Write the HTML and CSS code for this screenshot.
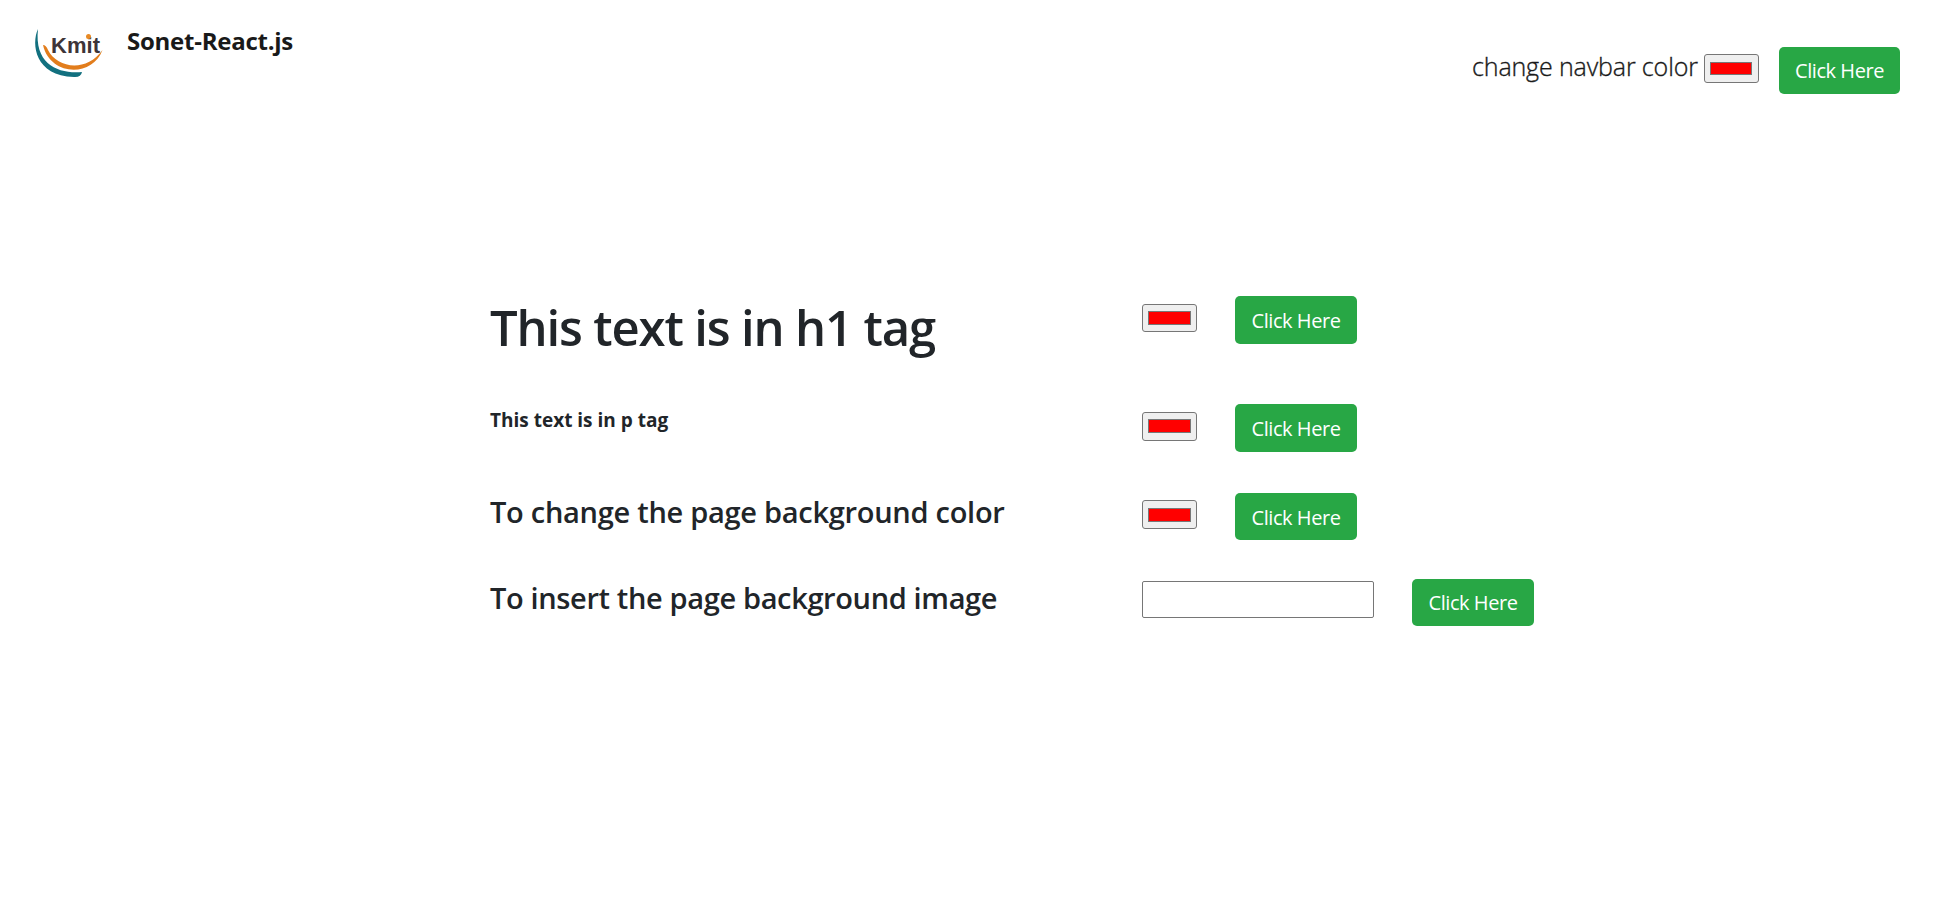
FILE: index.html
```
<!DOCTYPE html>
<html lang="en">
<head>
<meta charset="utf-8">
<title>Sonet-React.js</title>
<link rel="stylesheet" href="styles.css">
</head>
<body>
<header class="navbar">
  <svg class="logo" width="80" height="64" viewBox="0 0 80 64" role="img" aria-label="Kmit">
    <path d="M10 9C3 24 7 56 46 57Q53 57.500 54 52C31 54 6 45 10 9Z" fill="#12707f"/>
    <path d="M15 25Q18 25 20 30C29 48 58 53 74.500 30C64 58 22 56 15 25Z" fill="#e27d1c"/>
    <text class="logo-text" x="23" y="32.500" textLength="49">Kmit</text>
    <circle cx="60.500" cy="16.500" r="2.500" fill="#e88a25"/>
  </svg>
  <span class="brand">Sonet-React.js</span>
  <div class="nav-tools">
    <span class="nav-label">change navbar color</span>
    <button class="swatch nav-swatch" aria-label="Navbar color"><span class="chip"></span></button>
    <button class="btn nav-btn">Click Here</button>
  </div>
</header>
<main class="settings">
  <section class="row row-h1">
    <h1 class="title">This text is in h1 tag</h1>
    <div class="controls"><button class="swatch short" aria-label="Heading color"><span class="chip"></span></button><button class="btn">Click Here</button></div>
  </section>
  <section class="row row-p">
    <p class="para">This text is in p tag</p>
    <div class="controls"><button class="swatch" aria-label="Paragraph color"><span class="chip"></span></button><button class="btn">Click Here</button></div>
  </section>
  <section class="row row-color">
    <h3 class="sub sub-color">To change the page background color</h3>
    <div class="controls"><button class="swatch low" aria-label="Page color"><span class="chip"></span></button><button class="btn slim">Click Here</button></div>
  </section>
  <section class="row row-image">
    <h3 class="sub sub-image">To insert the page background image</h3>
    <div class="controls"><input class="url" type="text" aria-label="Image URL"><button class="btn slim">Click Here</button></div>
  </section>
</main>
</body>
</html>
```
FILE: styles.css
```
* { box-sizing: border-box; }
body {
  margin: 0;
  background: #fff;
  color: #212529;
  font-family: "Open Sans", "Noto Sans", sans-serif;
}
h1, h3, p { margin: 0; white-space: nowrap; }
.navbar {
  display: flex;
  align-items: flex-start;
  height: 120px;
  padding: 20px 38px 0 28px;
}
.logo { flex: none; }
.logo-text {
  font: bold 22px "Liberation Sans", sans-serif;
  fill: #3d3438;
}
.brand {
  margin: 3px 0 0 19px;
  color: #191919;
  font-size: 24px;
  font-weight: 700;
  line-height: 36px;
  letter-spacing: -0.25px;
  white-space: nowrap;
}
.nav-tools { display: flex; align-items: flex-start; margin-left: auto; }
.nav-label {
  width: 232px;
  margin-top: 27px;
  color: #191919;
  font-size: 25px;
  font-weight: 300;
  line-height: 38px;
  letter-spacing: -0.13px;
  -webkit-text-stroke: 0.35px #191919;
  white-space: nowrap;
}
.swatch {
  display: flex;
  align-items: flex-start;
  flex: none;
  width: 55px;
  height: 29px;
  margin: 8px 0 0;
  padding: 6px 5px;
  border: 1px solid #767676;
  border-radius: 3px;
  background: #efefef;
}
.chip {
  display: block;
  flex: none;
  width: 43px;
  height: 14px;
  border: 1px solid #777;
  background: #f00;
}
.short { height: 28px; }
.low { margin-top: 7px; padding-top: 7px; }
.nav-swatch { margin-top: 34px; padding-top: 7px; }
.nav-swatch .chip { width: 42px; height: 13px; }
.btn {
  flex: none;
  width: 122px;
  height: 48px;
  margin: 0 0 0 38px;
  padding: 1px 0 0;
  border: 0;
  border-radius: 5px;
  background: #28a745;
  color: #fff;
  font: 400 20px/47px "Open Sans", "Noto Sans", sans-serif;
  letter-spacing: -0.45px;
}
.slim, .nav-btn { height: 47px; line-height: 46px; }
.row-color .btn { padding-top: 2px; line-height: 45px; }
.row-color .slim { padding-top: 3px; line-height: 44px; }
.nav-btn { width: 121px; margin: 27px 0 0 20px; }
.settings { padding: 176px 0 0 490px; }
.row { display: grid; grid-template-columns: 652px auto; align-items: start; }
.row-h1 { height: 108px; }
.row-p { height: 89px; }
.row-color { height: 86px; }
.row-image { height: 48px; }
.controls { display: flex; align-items: flex-start; }
.title { font-size: 49px; font-weight: 600; line-height: 62px; letter-spacing: -1.15px; }
.para { font-size: 19px; font-weight: 700; line-height: 33px; letter-spacing: 0; }
.sub { font-size: 29px; font-weight: 600; line-height: 37px; }
.sub-color { letter-spacing: -0.28px; }
.sub-image { letter-spacing: -0.36px; }
.url {
  width: 232px;
  height: 37px;
  margin: 2px 0 0;
  border: 1px solid #767676;
  border-radius: 2px;
  background: #fff;
}
```
